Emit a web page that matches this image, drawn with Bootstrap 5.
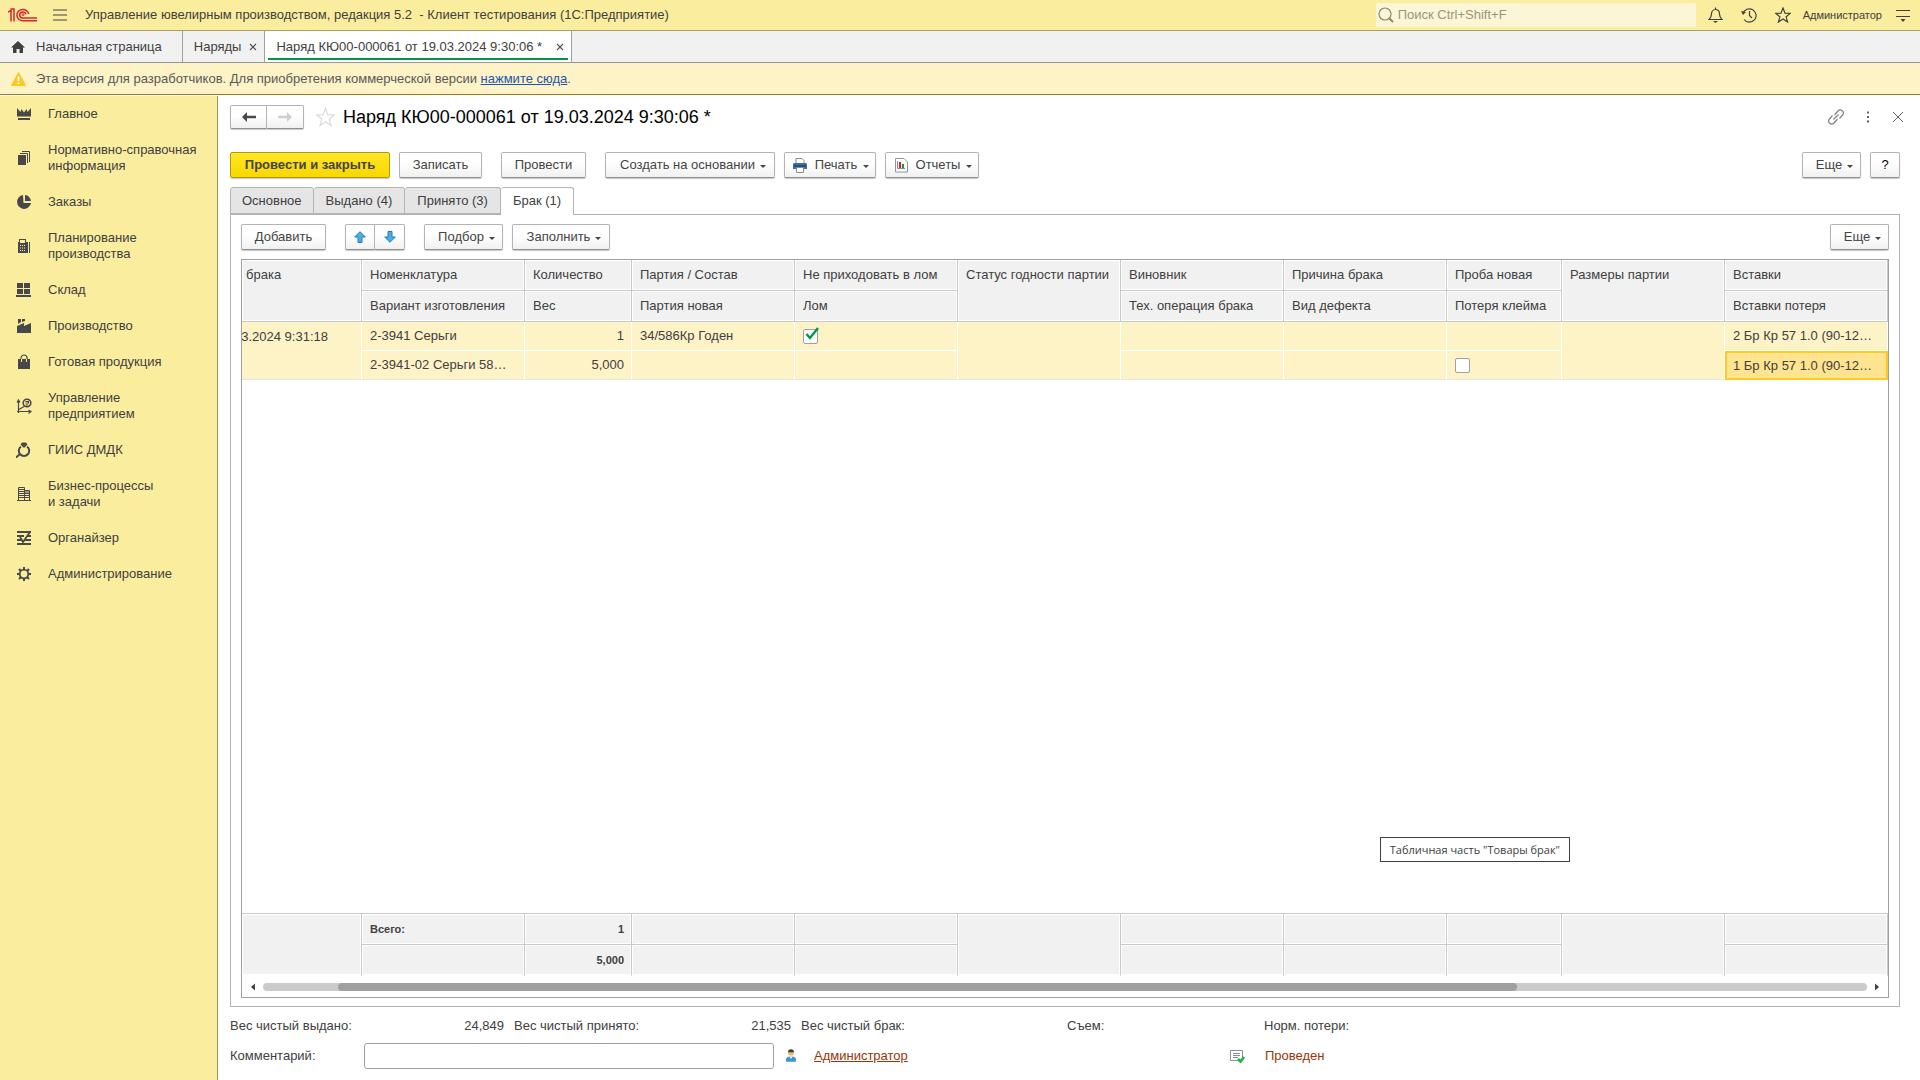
<!DOCTYPE html>
<html lang="ru">
<head>
<meta charset="utf-8">
<meta name="viewport" content="width=device-width, initial-scale=1">
<title>Наряд КЮ00-000061</title>
<link rel="stylesheet" href="https://cdn.jsdelivr.net/npm/bootstrap@5.3.0/dist/css/bootstrap.min.css">
<style>
  body { font-family: "Liberation Sans", Arial, sans-serif; font-size: 13px; line-height: 16px; color: #404040; background: #fff; }
  svg { display: block; flex: none; }
  button, input { font: inherit; color: inherit; }
  .plain-btn { background: none; border: 0; padding: 0; }
  .app-bar { height: 31px; background: #fbed9e; border-bottom: 1px solid #aaa169; padding: 0 8px; }
  .app-title { white-space: pre; padding-left: 18px; }
  .app-tools { gap: 18px; }
  .search-box { width: 320px; height: 24px; background: #fdf6d6; border-radius: 2px; padding-left: 2px; margin-right: 12px; }
  .search-box input { background: none; border: 0; outline: 0; min-width: 0; padding: 0; }
  .search-box input::placeholder { color: #99957c; opacity: 1; }
  .user-link { font-size: 11px; color: #404040; text-decoration: none; margin: 0 -6px; }
  .win-tabs { height: 32px; background: #f1f1f1; border-bottom: 1px solid #969696; }
  .win-tab { border-right: 1px solid #a0a0a0; padding: 0 7px 0 11px; color: #404040; text-decoration: none; }
  .win-tab.home { padding-right: 20px; gap: 11px; }
  .win-tab.current { background: #fff; position: relative; min-width: 307px; justify-content: space-between; }
  .win-tab.current::after { content: ""; position: absolute; left: 3px; right: 3px; bottom: 2px; height: 2px; background: #009646; }
  .notice { height: 32px; background: #fef2c7; border-bottom: 1px solid #9c7e1c; padding: 0 11px; margin-bottom: 1px; color: #595959; gap: 10px; }
  .notice a { color: #1c55ae; }
  .side { width: 218px; background: #fbed9e; border-right: 1px solid #99905c; }
  .side a { display: flex; align-items: center; gap: 16px; padding: 10px 8px 10px 16px; color: #404040; text-decoration: none; }
  .work { padding: 9px 20px 11px 12px; min-width: 0; }
  .form-title { font-size: 18px; line-height: 24px; color: #000; }
  .head-tools { gap: 18px; margin-right: -4px; }
  .cmd-bar { padding: 15px 0 9px; }
  .gap-s { margin-left: 9px; }
  .gap-l { margin-left: 19px; }
  .btn-c { height: 26px; border: 1px solid #b3b3b3; border-bottom-color: #8f8f8f; border-radius: 2px; background: linear-gradient(#fff 40%, #f1f1f1); box-shadow: 0 1px 1px #c8c8c8; padding: 0 12px; color: #444; display: inline-flex; align-items: center; justify-content: center; white-space: nowrap; }
  .btn-c.main { background: linear-gradient(#ffe526, #f8d800); border-color: #b5990c; font-weight: bold; }
  .btn-c.has-caret { padding-right: 6px; }
  .btn-c.has-icon { padding-left: 7px; gap: 7px; }
  .btn-c.nav-b { height: 24px; width: 37px; padding: 0; }
  .btn-c.arr { width: 30px; padding: 0; }
  .caret { width: 0; border: 3px solid transparent; border-top-color: #444; border-bottom: 0; margin: 2px 0 0 5px; }
  .has-icon .caret { margin-left: -1px; }
  .w-main { width: 160px; } .w-save { width: 83px; } .w-post { width: 85px; } .w-base { width: 170px; }
  .w-print { width: 92px; } .w-rep { width: 94px; } .w-more { width: 59px; } .w-q { width: 30px; }
  .w-add { width: 85px; } .w-pick { width: 79px; } .w-fill { width: 98px; }
  .form-tabs { margin-bottom: -1px; position: relative; }
  .form-tab { height: 27px; background: #e5e5e5; border: 1px solid #b3b3b3; border-left-width: 0; color: #404040; padding: 0 12px; border-radius: 3px 3px 0 0; }
  .form-tab:first-child { border-left-width: 1px; padding: 0 11px; }
  .form-tab.current { background: #fff; height: 28px; padding-bottom: 1px; border-bottom: 0; }
  .panel { border: 1px solid #b3b3b3; padding: 9px 10px 8px; }
  .gridbox { border: 1px solid #a0a0a0; margin-top: 9px; }
  .gridtbl { width: 100%; table-layout: fixed; border-collapse: separate; border-spacing: 0; }
  .gridtbl th, .gridtbl td { padding: 0 7px 0 8px; font-weight: normal; overflow: hidden; white-space: nowrap; text-overflow: ellipsis; vertical-align: middle; }
  .gridtbl th, .gridtbl tfoot td { height: 31px; background: #f1f1f1; border-right: 1px solid #c9c9c9; border-bottom: 1px solid #c9c9c9; box-shadow: inset 0 0 0 1px #fff; }
  .gridtbl .tall { vertical-align: top; padding-top: 7px; }
  .gridtbl th:first-child, .gridtbl tbody td:first-child { text-overflow: clip; }
  .gridtbl tbody td { height: 29px; background: #fef2c7; border-right: 1px solid #fff; border-bottom: 1px solid #fff; }
  .gridtbl tbody td.long { padding-right: 15px; text-overflow: ellipsis; }
  .gridtbl tbody .picked { background: #ffe48f; border: 0; box-shadow: inset 0 0 0 2px #fcca22; }
  .gridtbl tbody .last-line td, .gridtbl tbody .low { border-bottom-color: #e6e6e6; }
  .gridtbl tfoot td { font-size: 11px; font-weight: bold; }
  .gridtbl tfoot tr:last-child td, .gridtbl tfoot .low { border-bottom-color: #fff; }
  .totals { border-top: 1px solid #c9c9c9; }
  .stamp { display: flex; justify-content: flex-end; padding-right: 26px; }
  .cell-check { appearance: none; display: block; width: 15px; height: 15px; margin: 0; background: #fff; border: 1px solid #a0a0a0; border-radius: 2px; }
  .check-holder { position: relative; width: 16px; }
  .check-holder svg { position: absolute; left: 2px; top: -2px; pointer-events: none; }
  .hscroll { height: 21px; padding: 0 8px; gap: 7px; }
  .hs-track { height: 8px; border-radius: 4px; background: #cbcbcb; }
  .hs-thumb { height: 8px; border-radius: 4px; background: #a0a0a0; }
  .hint { position: absolute; right: 318px; bottom: 135px; border: 1px solid #404040; background: #fff; font: 11px/23px "Open Sans", sans-serif; padding: 0 9px; }
  .sum-row { height: 36px; padding-top: 2px; }
  .cap-1 { width: 134px; } .val-1 { width: 140px; text-align: right; margin-right: 10px; }
  .cap-2 { width: 137px; } .val-2 { width: 140px; text-align: right; margin-right: 10px; }
  .cap-3 { width: 266px; } .cap-4 { width: 197px; }
  .note-in { width: 410px; height: 26px; border: 1px solid #a0a0a0; border-radius: 3px; padding: 0 6px; margin-right: 12px; }
  .who { width: 415px; margin-left: 18px; }
  .who a, .posted { color: #963609; }
</style>
<script src="https://cdn.jsdelivr.net/npm/bootstrap@5.3.0/dist/js/bootstrap.bundle.min.js"></script>
</head>
<body class="d-flex flex-column min-vh-100">

<header class="app-bar d-flex align-items-center">
  <svg width="29" height="14" viewBox="0 0 29 14" fill="none" stroke="#d9232a" stroke-width="1.500"><path d="M0 4L3 2.500V13.500M6 13.500V1H2.500"/><path d="M20.800 6A6 5.600 0 1 0 15 12.700H29M18 6.200A3.200 3 0 1 0 15 10H29"/><circle cx="15" cy="6.600" r="1" stroke-width="1"/></svg>
  <button class="plain-btn ms-3" aria-label="Меню"><svg width="14" height="12" viewBox="0 0 14 12" stroke="#404040" stroke-width="1.200"><path d="M0 1H14M0 6H14M0 11H14"/></svg></button>
  <div class="app-title flex-grow-1">Управление ювелирным производством, редакция 5.2  - Клиент тестирования (1С:Предприятие)</div>
  <label class="search-box d-flex align-items-center gap-1">
    <svg width="16" height="16" viewBox="0 0 16 16" fill="none" stroke="#8b866c" stroke-width="1.200"><circle cx="7" cy="7" r="6"/><path d="M11 11L15 15" stroke-width="2"/></svg>
    <input type="text" class="flex-grow-1" placeholder="Поиск Ctrl+Shift+F" aria-label="Поиск">
  </label>
  <div class="app-tools d-flex align-items-center">
    <button class="plain-btn" aria-label="Уведомления"><svg width="15" height="16" viewBox="0 0 15 16" fill="none" stroke="#404040" stroke-width="1.200"><path d="M1 12.500C3 10.500 3.500 9 3.500 7C3.500 4.500 5 2.500 7.500 2.500S11.500 4.500 11.500 7C11.500 9 12 10.500 14 12.500ZM7.500 2.500V.5"/><path d="M5 14H10L7.500 16Z" fill="#404040" stroke="none"/></svg></button>
    <button class="plain-btn" aria-label="История"><svg width="16" height="16" viewBox="0 0 16 16" fill="none" stroke="#404040" stroke-width="1.200"><path d="M2 6.500A6.700 6.700 0 1 1 3 12.500M8.500 4V8.500L11 11"/><path d="M0 4L2 8L5 5Z" fill="#404040" stroke="none"/></svg></button>
    <button class="plain-btn" aria-label="Избранное"><svg width="16" height="16" viewBox="0 0 16 16" fill="none" stroke="#404040" stroke-width="1.200"><path d="M8 1L10 6.200L15.300 6.400L11.100 9.800L12.600 15L8 12L3.400 15L4.900 9.800L.7 6.400L6 6.200Z"/></svg></button>
    <a href="#" class="user-link">Администратор</a>
    <button class="plain-btn" aria-label="Настройка"><svg width="18" height="16" viewBox="0 0 18 16" stroke="#404040" stroke-width="1.200"><path d="M2 3.500H16M2 9.500H16"/><path d="M6.500 12H11.500L9 15Z" fill="#404040" stroke="none"/></svg></button>
  </div>
</header>

<nav class="win-tabs d-flex">
  <a href="#" class="win-tab home d-flex align-items-center"><svg width="14" height="14" viewBox="0 0 14 14" fill="#404040"><path d="M7 1L14 7.500H12V13H8.500V9H5.500V13H2V7.500H0Z"/></svg>Начальная страница</a>
  <a href="#" class="win-tab d-flex align-items-center gap-2">Наряды <svg width="8" height="8" viewBox="0 0 8 8" stroke="#505050" stroke-width="1.100"><path d="M1 1L7 7M7 1L1 7"/></svg></a>
  <a href="#" class="win-tab current d-flex align-items-center">Наряд КЮ00-000061 от 19.03.2024 9:30:06 * <svg width="8" height="8" viewBox="0 0 8 8" stroke="#505050" stroke-width="1.100"><path d="M1 1L7 7M7 1L1 7"/></svg></a>
</nav>

<div class="notice d-flex align-items-center">
  <svg width="15" height="14" viewBox="0 0 15 14"><path d="M7.500 .5L14.500 13.500H.5Z" fill="#fdc820" stroke="#fdc820" stroke-linejoin="round"/><path d="M7.500 4.500V9M7.500 10.500V12" stroke="#fff" stroke-width="1.800"/></svg>
  <div>Эта версия для разработчиков. Для приобретения коммерческой версии <a href="#">нажмите сюда</a>.</div>
</div>

<div class="d-flex flex-grow-1">
  <nav class="side flex-shrink-0">
    <a href="#"><svg width="16" height="16" viewBox="0 0 16 16" fill="#484848"><path d="M1 2L4.500 6L5.500 3L8 6.500L10.500 3L11.500 6L15 2V10.500H1ZM2 12H14V14H2Z"/></svg>Главное</a>
    <a href="#"><svg width="16" height="16" viewBox="0 0 16 16" fill="#484848"><path d="M2 5H10V15H2Z"/><path d="M4 3.500H11.500V13M6 1.500H13.500V12" fill="none" stroke="#484848"/></svg><span>Нормативно-справочная<br>информация</span></a>
    <a href="#"><svg width="16" height="16" viewBox="0 0 16 16" fill="#484848"><path d="M7 1A7 7 0 1 0 15 9H7.500Z"/><path d="M9 1A6.500 6.500 0 0 1 15 7H9Z"/></svg>Заказы</a>
    <a href="#"><svg width="16" height="16" viewBox="0 0 16 16" fill="#484848"><path fill-rule="evenodd" d="M2 4H3V1H10V4H12V15H2ZM4 2V5H9V2ZM4 7V8H5V7ZM6 7V8H7V7ZM8 7V8H9V7ZM4 9.500V10.500H5V9.500ZM6 9.500V10.500H7V9.500ZM8 9.500V10.500H9V9.500ZM4 12V13H5V12ZM6 12V13H7V12ZM8 12V13H9V12Z"/><path d="M13 4H14V15H13Z"/></svg><span>Планирование<br>производства</span></a>
    <a href="#"><svg width="16" height="16" viewBox="0 0 16 16" fill="#484848"><path d="M1 1H7V6H1ZM8 1H14V6H8ZM1 7H7V12H1ZM8 7H14V12H8ZM0 13H15V15H0Z"/></svg>Склад</a>
    <a href="#"><svg width="16" height="16" viewBox="0 0 16 16" fill="#484848"><path d="M1 8L8 5V8L15 5V15H1ZM2 1H5V4L2 6ZM6 1H9V3L6 4Z"/></svg>Производство</a>
    <a href="#"><svg width="16" height="16" viewBox="0 0 16 16" fill="#484848"><path d="M2 5H14V15H2Z"/><path d="M5 8V4A3 3 0 0 1 11 4V8" fill="none" stroke="#484848" stroke-width="1.200"/><path d="M5.500 5V8M10.500 5V8" stroke="#fbed9e"/></svg>Готовая продукция</a>
    <a href="#"><svg width="16" height="16" viewBox="0 0 16 16" fill="none" stroke="#484848" stroke-width="1.200"><path d="M2.500 15V3M1 4.500L2.500 2L4 4.500M1 13.500H14M12.500 12L15 13.500L12.500 15.500M3 11.500L8 8.500"/><circle cx="11" cy="5" r="3.800" stroke-width="1.600"/><path d="M9.500 3.500H12.500V5H9.500M9.500 7H12.500"/></svg><span>Управление<br>предприятием</span></a>
    <a href="#"><svg width="16" height="16" viewBox="0 0 16 16" fill="none" stroke="#484848" stroke-width="2"><path d="M5 4.500A5.200 5.200 0 1 0 11 4.500M4 12L0 15.500"/><path d="M4.500 2.500L6 .5H10L11.500 2.500L8 6Z" fill="#484848" stroke="none"/></svg>ГИИС ДМДК</a>
    <a href="#"><svg width="16" height="16" viewBox="0 0 16 16" fill="none" stroke="#484848"><path d="M1 14.500H15M2.500 14V1.500H8.500V14M9 4.500H13.500V14"/><path d="M3 3.500H8M3 5.500H8M3 7.500H13M3 9.500H13M3 11.500H13M9 6H13" stroke-width="1.200"/></svg><span>Бизнес-процессы<br>и задачи</span></a>
    <a href="#"><svg width="16" height="16" viewBox="0 0 16 16" fill="none" stroke="#484848" stroke-width="1.800"><path d="M1 2H15M1 6H8M11 6H15M1 10H6M9 10H15M1 14H15M4 7L7 12L14 2"/></svg>Органайзер</a>
    <a href="#"><svg width="16" height="16" viewBox="0 0 16 16" fill="none" stroke="#484848"><circle cx="8" cy="8" r="4.300" stroke-width="1.800"/><path d="M8 1V4M8 12V15M1 8H4M12 8H15M3 3L5 5M11 11L13 13M13 3L11 5M5 11L3 13" stroke-width="2"/></svg>Администрирование</a>
  </nav>

  <main class="work d-flex flex-column flex-grow-1">
    <div class="d-flex align-items-center mb-2">
      <div class="d-flex">
        <button class="btn-c nav-b rounded-end-0" aria-label="Назад"><svg width="14" height="10" viewBox="0 0 14 10" fill="#484848"><path d="M0 5L5 0V3.800H14V6.200H5V10Z"/></svg></button>
        <button class="btn-c nav-b rounded-start-0 border-start-0" aria-label="Вперед"><svg width="14" height="10" viewBox="0 0 14 10" fill="#cfcfcf"><path d="M14 5L9 0V3.800H0V6.200H9V10Z"/></svg></button>
      </div>
      <button class="plain-btn ms-2 ps-1 me-2" aria-label="В избранное"><svg width="19" height="20" viewBox="0 0 20 20" fill="none" stroke="#dcdcdc" stroke-width="1.300"><path d="M10 1L12.500 7.500L19 8L14 12L15.700 19L10 15L4.300 19L6 12L1 8L7.500 7.500Z"/></svg></button>
      <h1 class="form-title m-0 flex-grow-1">Наряд КЮ00-000061 от 19.03.2024 9:30:06 *</h1>
      <div class="head-tools d-flex align-items-center">
        <button class="plain-btn" aria-label="Ссылка"><svg width="16" height="16" viewBox="0 0 16 16" fill="none" stroke="#808080" stroke-width="1.200"><path d="M6.500 6L10 2A3 3 0 0 1 14.500 6L11.500 9.500M9.500 10L6 14A3 3 0 0 1 1.500 10L4.500 6.500M5.500 10.500L10.500 5.500"/></svg></button>
        <button class="plain-btn px-1" aria-label="Действия"><svg width="4" height="12" viewBox="0 0 4 12" fill="#606060"><path d="M1 .5H3V2.500H1ZM1 5H3V7H1ZM1 9.500H3V11.500H1Z"/></svg></button>
        <button class="plain-btn" aria-label="Закрыть"><svg width="12" height="12" viewBox="0 0 12 12" stroke="#606060"><path d="M1 1L11 11M11 1L1 11"/></svg></button>
      </div>
    </div>

    <div class="cmd-bar d-flex align-items-center">
      <button class="btn-c main w-main">Провести и закрыть</button>
      <button class="btn-c w-save gap-s">Записать</button>
      <button class="btn-c w-post gap-l">Провести</button>
      <button class="btn-c has-caret w-base gap-l">Создать на основании<span class="caret"></span></button>
      <button class="btn-c has-caret has-icon w-print gap-s"><svg width="16" height="16" viewBox="0 0 16 16"><path d="M4 6V1.500H10L12 3.500V6" fill="#fff" stroke="#7d8b98"/><path d="M1 7L2 6H14L15 7V12H1Z" fill="#3f6d9c"/><path d="M2 9H14" stroke="#16314c"/><path d="M4.500 10.500H11.500V15.500H4.500Z" fill="#fff" stroke="#7d8b98"/></svg>Печать<span class="caret"></span></button>
      <button class="btn-c has-caret has-icon w-rep gap-s"><svg width="16" height="16" viewBox="0 0 16 16"><path d="M2.500 1.500H11L14.500 5V15H2.500Z" fill="#fff" stroke="#8c98a4"/><path d="M4.500 4V11.500H12" fill="none" stroke="#889"/><path d="M6 5H8V11H6Z" fill="#f01818"/><path d="M9 7H11V11H9Z" fill="#189a28"/></svg>Отчеты<span class="caret"></span></button>
      <button class="btn-c has-caret w-more ms-auto">Еще<span class="caret"></span></button>
      <button class="btn-c w-q gap-s text-black">?</button>
    </div>

    <div class="form-tabs d-flex align-items-start">
      <button class="form-tab">Основное</button>
      <button class="form-tab">Выдано (4)</button>
      <button class="form-tab">Принято (3)</button>
      <button class="form-tab current">Брак (1)</button>
    </div>

    <section class="panel d-flex flex-column flex-grow-1">
      <div class="d-flex">
        <button class="btn-c w-add">Добавить</button>
        <div class="d-flex gap-l">
          <button class="btn-c arr rounded-end-0" aria-label="Вверх"><svg width="12" height="12" viewBox="0 0 12 12" fill="#45b0ee" stroke="#2a79ab"><path d="M6 .7L11.300 6H8V11.500H4V6H.7Z"/></svg></button>
          <button class="btn-c arr rounded-start-0 border-start-0" aria-label="Вниз"><svg width="12" height="12" viewBox="0 0 12 12" fill="#45b0ee" stroke="#2a79ab"><path d="M6 11.300L11.300 6H8V.5H4V6H.7Z"/></svg></button>
        </div>
        <button class="btn-c has-caret w-pick gap-l">Подбор<span class="caret"></span></button>
        <button class="btn-c has-caret w-fill gap-s">Заполнить<span class="caret"></span></button>
        <button class="btn-c has-caret w-more ms-auto">Еще<span class="caret"></span></button>
      </div>

      <div class="gridbox d-flex flex-column flex-grow-1 position-relative">
        <table class="gridtbl">
          <colgroup><col style="width:120px"><col style="width:163px"><col style="width:107px"><col style="width:163px"><col style="width:163px"><col style="width:163px"><col style="width:163px"><col style="width:163px"><col style="width:115px"><col style="width:163px"><col style="width:163px"></colgroup>
          <thead>
            <tr><th rowspan="2" class="tall ps-1">брака</th><th>Номенклатура</th><th>Количество</th><th>Партия / Состав</th><th>Не приходовать в лом</th><th rowspan="2" class="tall">Статус годности партии</th><th>Виновник</th><th>Причина брака</th><th>Проба новая</th><th rowspan="2" class="tall">Размеры партии</th><th>Вставки</th></tr>
            <tr><th>Вариант изготовления</th><th>Вес</th><th>Партия новая</th><th>Лом</th><th>Тех. операция брака</th><th>Вид дефекта</th><th>Потеря клейма</th><th>Вставки потеря</th></tr>
          </thead>
          <tbody>
            <tr><td rowspan="2" class="tall low"><div class="stamp">19.03.2024 9:31:18</div></td><td class="long">2-3941 Серьги</td><td class="text-end">1</td><td>34/586Кр Годен</td><td><div class="check-holder"><input type="checkbox" class="cell-check" checked aria-label="Не приходовать в лом"><svg width="14" height="14" viewBox="0 0 14 14" fill="none" stroke="#00964a" stroke-width="2.400"><path d="M1.500 7L5 11L13 1"/></svg></div></td><td rowspan="2" class="low"></td><td></td><td></td><td></td><td rowspan="2" class="low"></td><td class="long">2 Бр Кр 57 1.0 (90-120) Кр</td></tr>
            <tr class="last-line"><td class="long">2-3941-02 Серьги 585 Кр</td><td class="text-end">5,000</td><td></td><td></td><td></td><td></td><td><input type="checkbox" class="cell-check" aria-label="Потеря клейма"></td><td class="long picked">1 Бр Кр 57 1.0 (90-120) Кр</td></tr>
          </tbody>
        </table>
        <div class="flex-grow-1"></div>
        <table class="gridtbl totals">
          <colgroup><col style="width:120px"><col style="width:163px"><col style="width:107px"><col style="width:163px"><col style="width:163px"><col style="width:163px"><col style="width:163px"><col style="width:163px"><col style="width:115px"><col style="width:163px"><col style="width:163px"></colgroup>
          <tfoot>
            <tr><td rowspan="2" class="low"></td><td>Всего:</td><td class="text-end">1</td><td></td><td></td><td rowspan="2" class="low"></td><td></td><td></td><td></td><td rowspan="2" class="low"></td><td></td></tr>
            <tr><td></td><td class="text-end">5,000</td><td></td><td></td><td></td><td></td><td></td><td></td></tr>
          </tfoot>
        </table>
        <div class="hscroll d-flex align-items-center">
          <svg width="6" height="8" viewBox="0 0 6 8" fill="#404040"><path d="M5 .5V7.500L1 4Z"/></svg>
          <div class="hs-track flex-grow-1"><div class="hs-thumb" style="width:73.5%;margin-left:4.7%"></div></div>
          <svg width="6" height="8" viewBox="0 0 6 8" fill="#404040"><path d="M1 .5V7.500L5 4Z"/></svg>
        </div>
        <div class="hint">Табличная часть "Товары брак"</div>
      </div>
    </section>

    <div class="sum-row d-flex align-items-center">
      <span class="cap-1">Вес чистый выдано:</span><span class="val-1">24,849</span>
      <span class="cap-2">Вес чистый принято:</span><span class="val-2">21,535</span>
      <span class="cap-3">Вес чистый брак:</span><span class="cap-4">Съем:</span><span>Норм. потери:</span>
    </div>
    <div class="d-flex align-items-center">
      <label class="cap-1" for="note">Комментарий:</label>
      <input type="text" id="note" class="note-in">
      <svg width="10" height="14" viewBox="0 0 12 16"><circle cx="6" cy="4" r="3.500" fill="#e8b96a"/><path d="M2.500 3.500A3.500 3.500 0 0 1 9.500 3.500Z" fill="#3c3c3c"/><path d="M0 15V11Q1 9 4 8.500H8Q11 9 12 11V15Z" fill="#3a96cf"/><path d="M4 8.500H8L6 11.500Z" fill="#fff"/></svg>
      <span class="who"><a href="#">Администратор</a></span>
      <svg width="16" height="16" viewBox="0 0 16 16"><path d="M1.500 2.500H13.500V12.500H1.500Z" fill="#fff" stroke="#8592a3"/><path d="M4 5.500H11M4 7.500H11M4 9.500H9" stroke="#8592a3"/><path d="M9 11L11.500 13.500L15 9" fill="none" stroke="#22b43a" stroke-width="2.600"/></svg>
      <span class="posted ms-3 ps-1">Проведен</span>
    </div>
  </main>
</div>
</body>
</html>
